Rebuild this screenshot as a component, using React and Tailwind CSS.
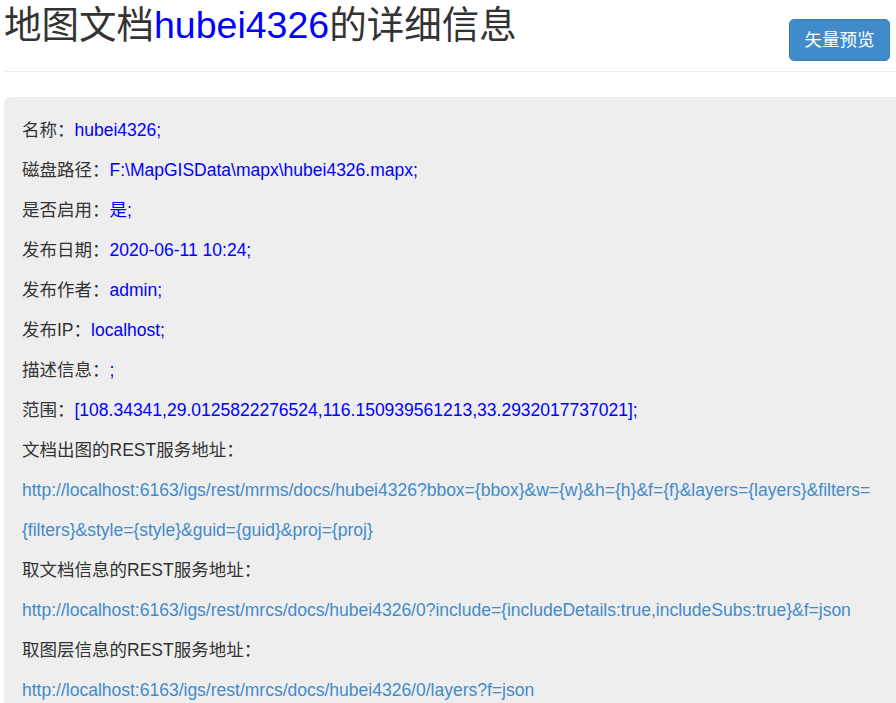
import React from 'react';

const rows = [
  { label: '名称：', value: 'hubei4326;' },
  { label: '磁盘路径：', value: 'F:\\MapGISData\\mapx\\hubei4326.mapx;' },
  { label: '是否启用：', value: '是;' },
  { label: '发布日期：', value: '2020-06-11 10:24;' },
  { label: '发布作者：', value: 'admin;' },
  { label: '发布IP：', value: 'localhost;' },
  { label: '描述信息：', value: ';' },
  { label: '范围：', value: '[108.34341,29.0125822276524,116.150939561213,33.2932017737021];' },
];

const services = [
  {
    label: '文档出图的REST服务地址：',
    url: 'http://localhost:6163/igs/rest/mrms/docs/hubei4326?bbox={bbox}&w={w}&h={h}&f={f}&layers={layers}&filters={filters}&style={style}&guid={guid}&proj={proj}',
  },
  {
    label: '取文档信息的REST服务地址：',
    url: 'http://localhost:6163/igs/rest/mrcs/docs/hubei4326/0?include={includeDetails:true,includeSubs:true}&f=json',
  },
  {
    label: '取图层信息的REST服务地址：',
    url: 'http://localhost:6163/igs/rest/mrcs/docs/hubei4326/0/layers?f=json',
  },
];

export default function App() {
  return (
    <div
      className="min-h-[703px] overflow-hidden bg-white pl-[4px] text-[#333]"
      style={{ fontFamily: '"Liberation Sans", "Noto Sans CJK SC", sans-serif' }}
    >
      {/* header */}
      <div className="flex items-start justify-between">
        <h1 className="mt-[3px] text-[37.5px] font-normal leading-[44px] text-[#333]">
          地图文档<span className="text-[#0000ff]">hubei4326</span>的详细信息
        </h1>
        <button className="mr-[6px] mt-[19px] h-[42px] w-[101px] rounded-[5px] border border-[#357ebd] bg-[#428bca] text-[17.5px] text-white">
          矢量预览
        </button>
      </div>
      <hr className="mt-[10px] border-t border-[#eeeeee]" />

      {/* detail panel */}
      <div className="mt-[25px] mr-[-10px] rounded-[6px] bg-[#eeeeee] pl-[18px] pr-[30px] pt-[13px] pb-[20px] text-[17.5px] leading-[40px]">
        {rows.map((r) => (
          <p key={r.label}>
            {r.label}
            <span className="text-[#0000ff]">{r.value}</span>
          </p>
        ))}
        {services.map((s) => (
          <div key={s.label}>
            <p>{s.label}</p>
            <p className="break-all text-[#428bca]">{s.url}</p>
          </div>
        ))}
      </div>
    </div>
  );
}
